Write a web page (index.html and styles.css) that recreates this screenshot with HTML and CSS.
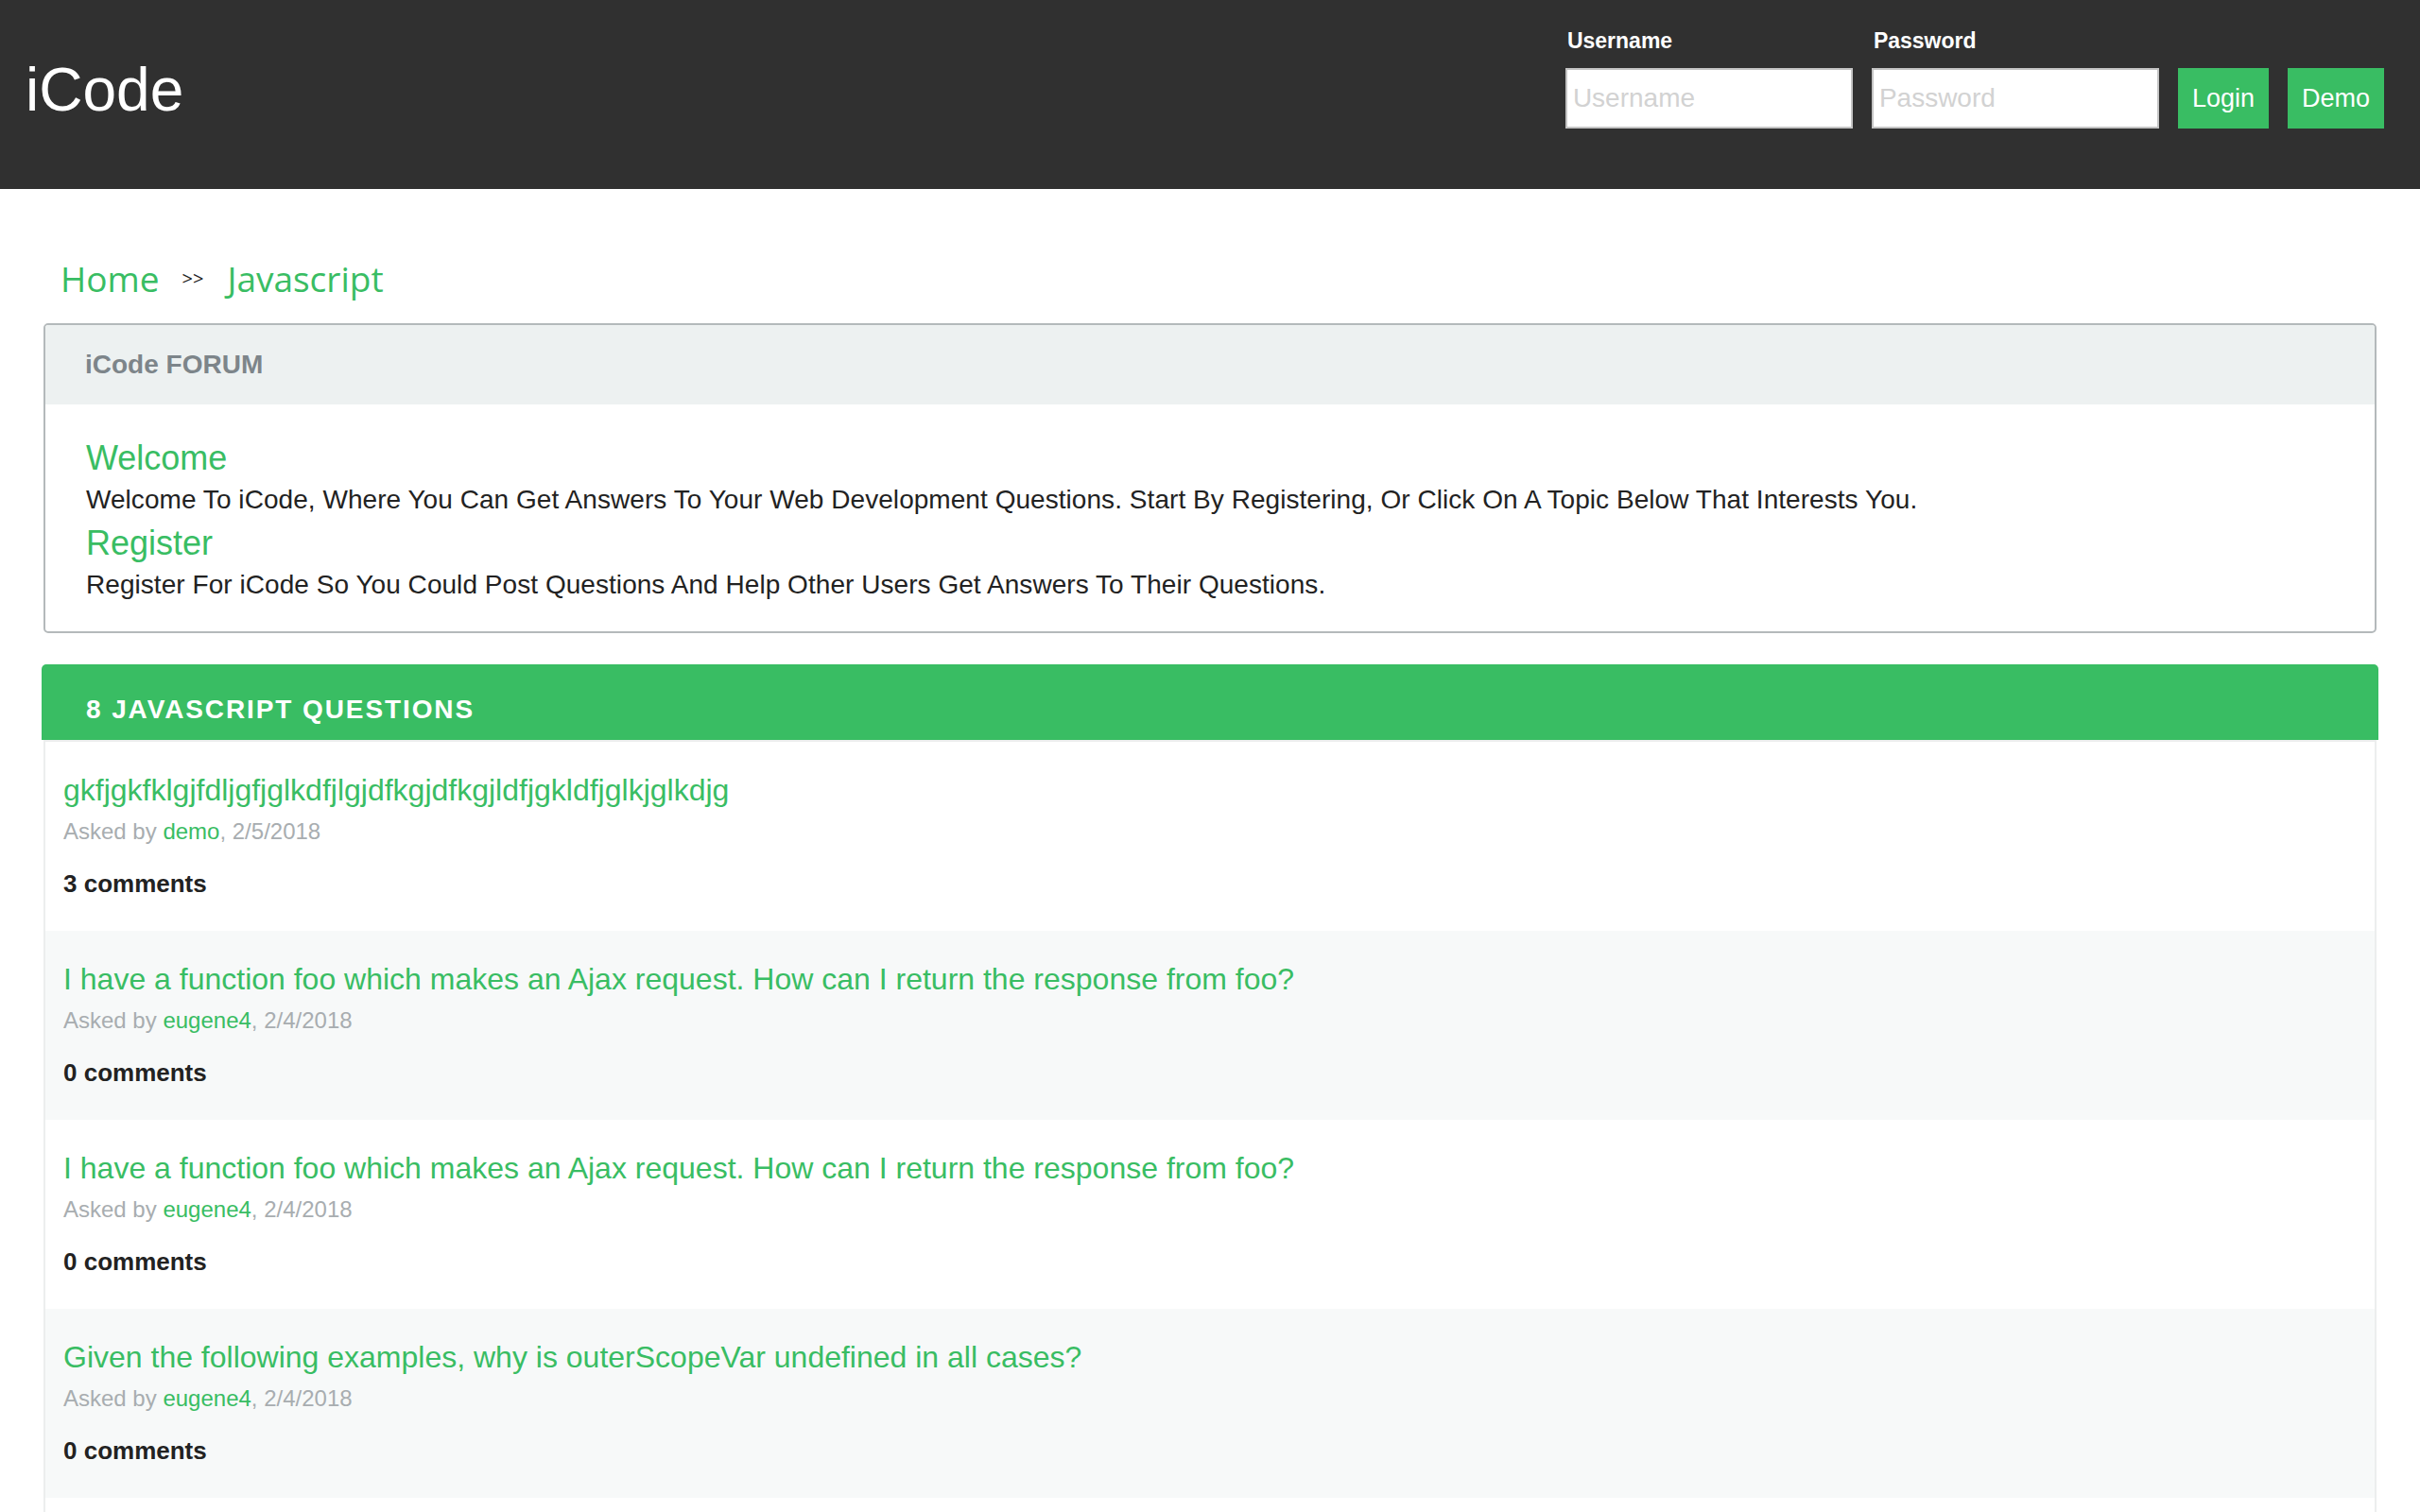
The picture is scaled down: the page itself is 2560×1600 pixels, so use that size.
FILE: index.html
```html
<!DOCTYPE html>
<html lang="en">
<head>
<meta charset="utf-8">
<title>iCode</title>
<link rel="stylesheet" href="styles.css">
</head>
<body>
<header class="topbar">
  <div class="logo">iCode</div>
  <form class="login">
    <div class="field">
      <label class="field-label">Username</label>
      <input class="field-input" type="text" placeholder="Username">
    </div>
    <div class="field">
      <label class="field-label">Password</label>
      <input class="field-input" type="password" placeholder="Password">
    </div>
    <button class="btn" type="button">Login</button>
    <button class="btn" type="button">Demo</button>
  </form>
</header>

<main class="main">
  <nav class="crumbs">
    <a class="crumb">Home</a>
    <span class="crumb-sep">&gt;&gt;</span>
    <a class="crumb">Javascript</a>
  </nav>

  <section class="forum">
    <div class="forum-head">iCode FORUM</div>
    <div class="forum-body">
      <h2 class="forum-title">Welcome</h2>
      <p class="forum-text">Welcome To iCode, Where You Can Get Answers To Your Web Development Questions. Start By Registering, Or Click On A Topic Below That Interests You.</p>
      <h2 class="forum-title forum-title-2">Register</h2>
      <p class="forum-text">Register For iCode So You Could Post Questions And Help Other Users Get Answers To Their Questions.</p>
    </div>
  </section>

  <div class="qbar">8 JAVASCRIPT QUESTIONS</div>
  <ul class="qlist">
    <li class="q">
      <a class="q-title">gkfjgkfklgjfdljgfjglkdfjlgjdfkgjdfkgjldfjgkldfjglkjglkdjg</a>
      <div class="q-meta">Asked by <a class="q-user">demo</a>, 2/5/2018</div>
      <div class="q-count">3 comments</div>
    </li>
    <li class="q q-alt">
      <a class="q-title">I have a function foo which makes an Ajax request. How can I return the response from foo?</a>
      <div class="q-meta">Asked by <a class="q-user">eugene4</a>, 2/4/2018</div>
      <div class="q-count">0 comments</div>
    </li>
    <li class="q">
      <a class="q-title">I have a function foo which makes an Ajax request. How can I return the response from foo?</a>
      <div class="q-meta">Asked by <a class="q-user">eugene4</a>, 2/4/2018</div>
      <div class="q-count">0 comments</div>
    </li>
    <li class="q q-alt">
      <a class="q-title">Given the following examples, why is outerScopeVar undefined in all cases?</a>
      <div class="q-meta">Asked by <a class="q-user">eugene4</a>, 2/4/2018</div>
      <div class="q-count">0 comments</div>
    </li>
    <li class="q">
      <a class="q-title">How do I return the response from an asynchronous call?</a>
      <div class="q-meta">Asked by <a class="q-user">eugene4</a>, 2/4/2018</div>
      <div class="q-count">0 comments</div>
    </li>
  </ul>
</main>
</body>
</html>
```

FILE: styles.css
```css
* { box-sizing: border-box; }

html, body {
  margin: 0;
  padding: 0;
  background: #ffffff;
  font-family: "Liberation Sans", Arial, sans-serif;
  color: #222222;
}

a { text-decoration: none; }

/* ---------- top bar ---------- */
.topbar {
  height: 200px;
  background: #303030;
  display: flex;
  justify-content: space-between;
  align-items: flex-start;
  padding: 0 38px 0 27px;
}

.logo {
  margin-top: 58px;
  font-size: 64px;
  line-height: 74px;
  color: #ffffff;
}

.login {
  display: flex;
  align-items: flex-end;
  gap: 20px;
  margin-top: 29px;
}

.field {
  display: flex;
  flex-direction: column;
}

.field-label {
  font-size: 23px;
  line-height: 28px;
  font-weight: bold;
  color: #ffffff;
  padding-left: 2px;
  margin-bottom: 15px;
}

.field-input {
  width: 304px;
  height: 64px;
  border: 2px solid #c4c4c4;
  background: #ffffff;
  padding: 0 6px;
  font-family: "Liberation Sans", Arial, sans-serif;
  font-size: 28px;
  color: #333333;
  outline: none;
}

.field-input::placeholder { color: #d2d2d2; }

.btn {
  height: 64px;
  padding: 0 15px;
  border: none;
  background: #39bd63;
  color: #ffffff;
  font-family: "Liberation Sans", Arial, sans-serif;
  font-size: 27px;
  cursor: pointer;
}

/* ---------- main ---------- */
.main {
  padding: 0 44px;
}

.crumbs {
  display: flex;
  align-items: baseline;
  margin: 70px 0 15px 20px;
  font-family: "Open Sans", "Noto Sans", sans-serif;
  font-size: 37px;
  line-height: 50px;
}

.crumb { color: #39bd63; }

.crumb-sep {
  font-size: 20px;
  color: #222222;
  margin: 0 25px 0 24px;
  position: relative;
  top: -7px;
}

/* ---------- forum box ---------- */
.forum {
  margin: 0 2px;
  border: 2px solid #b4b9bb;
  border-radius: 5px;
  overflow: hidden;
}

.forum-head {
  background: #edf1f1;
  padding: 26px 42px 26px;
  font-size: 28px;
  line-height: 32px;
  font-weight: bold;
  color: #7d858a;
}

.forum-body {
  padding: 37px 43px 33px;
}

.forum-title {
  margin: 0;
  font-size: 36px;
  line-height: 40px;
  font-weight: normal;
  color: #39bd63;
}

.forum-title-2 { margin-top: 10px; }

.forum-text {
  margin: 8px 0 0;
  font-size: 28px;
  line-height: 32px;
  letter-spacing: 0.05px;
  color: #222222;
}

/* ---------- questions ---------- */
.qbar {
  margin-top: 33px;
  height: 80px;
  background: #39bd63;
  border-radius: 5px 5px 0 0;
  padding: 32px 47px 0;
  font-size: 28px;
  line-height: 32px;
  font-weight: bold;
  letter-spacing: 1.9px;
  color: #ffffff;
}

.qlist {
  list-style: none;
  margin: 0 2px;
  padding: 0;
  border: 2px solid #eceeee;
  border-bottom: none;
}

.q {
  height: 200px;
  padding: 31px 19px 0;
  background: #ffffff;
}

.q-alt { background: #f7f9f9; }

.q-title {
  display: block;
  font-size: 32px;
  line-height: 40px;
  color: #39bd63;
}

.q-meta {
  margin-top: 8px;
  font-size: 24px;
  line-height: 32px;
  color: #a8adb0;
}

.q-user { color: #39bd63; }

.q-count {
  margin-top: 23px;
  font-size: 26px;
  line-height: 32px;
  font-weight: bold;
  color: #222222;
}
```
